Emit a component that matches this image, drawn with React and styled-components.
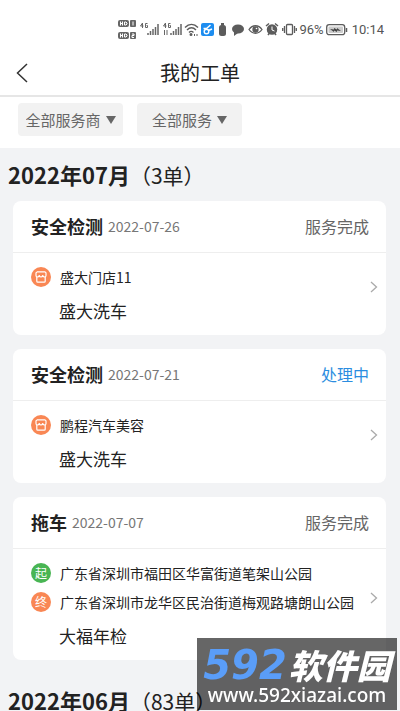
import React from 'react';
import styled, { createGlobalStyle } from 'styled-components';

const GlobalStyle = createGlobalStyle`
  * {
    box-sizing: border-box;
  }

  body {
    margin: 0;
    overflow-x: hidden;
    background-color: #f2f3f5;
    font-family: 'Noto Sans CJK SC', sans-serif;
    color: #222222;
  }
`;

const Page = styled.div`
  display: flex;
  flex-direction: column;
  height: 100vh;
  overflow: hidden;
`;

const StatusBar = styled.div`
  display: flex;
  align-items: center;
  justify-content: flex-end;
  gap: 2px;
  flex-shrink: 0;
  padding: 20px 16px 10px;
  background-color: #ffffff;
  font-family: Roboto, sans-serif;
  font-size: 13px;
  line-height: 20px;
  color: #555555;
`;

const Time = styled.time`
  margin-left: 2px;
`;

const NavBar = styled.header`
  display: grid;
  grid-template-columns: 44px 1fr 44px;
  align-items: center;
  flex-shrink: 0;
  height: 47px;
  border-bottom: 2px solid #e6e6e6;
  background-color: #ffffff;
`;

const Back = styled.button`
  display: flex;
  align-items: center;
  justify-content: center;
  height: 44px;
  padding: 0;
  border: 0;
  background: none;
  color: #333333;
`;

const Title = styled.h1`
  margin: 0;
  text-align: center;
  font-size: 20px;
  font-weight: 400;
  line-height: 30px;
`;

const Filters = styled.div`
  display: flex;
  gap: 14px;
  flex-shrink: 0;
  padding: 6px 18px 12px;
  background-color: #ffffff;
`;

const Filter = styled.label`
  display: flex;
  align-items: center;
  justify-content: center;
  gap: 4px;
  width: 105px;
  height: 33px;
  border-radius: 4px;
  background-color: #f2f2f2;
  color: #666666;
`;

const Select = styled.select`
  appearance: none;
  padding: 0;
  border: 0;
  background: none;
  font-family: inherit;
  font-size: 15px;
  line-height: 24px;
  color: inherit;
`;

const Month = styled.h2`
  margin: 0;
  padding: 10px 8px 11px;
  font-size: 22px;
  font-weight: 700;
  line-height: 32px;
`;

const Count = styled.span`
  font-size: 21px;
  font-weight: 400;
  line-height: 20px;
`;

const Card = styled.article`
  margin: 0 14px 14px 13px;
  padding-bottom: 14px;
  border-radius: 8px;
  background-color: #ffffff;
`;

const CardHead = styled.div`
  display: flex;
  align-items: center;
  height: 52px;
  padding: 0 17px 2px 18px;
  border-bottom: 1px solid #eeeeee;
`;

const Kind = styled.h3`
  margin: 0;
  font-size: 18px;
  font-weight: 700;
`;

const OrderDate = styled.time`
  margin-left: 5px;
  font-size: 14px;
  color: #777777;
`;

const Status = styled.span`
  margin-left: auto;
  font-size: 16px;
  color: ${props => (props.$active ? '#2b8de0' : '#666666')};
`;

const CardBody = styled.a`
  display: flex;
  align-items: center;
  justify-content: space-between;
  padding-right: 7px;
  text-decoration: none;
  color: inherit;
`;

const Details = styled.div`
  display: flex;
  flex-direction: column;
  gap: 9px;
  padding: 14px 0 0 18px;
`;

const Place = styled.div`
  display: flex;
  align-items: center;
  gap: 9px;
  font-size: 14px;
  line-height: 20px;
  white-space: nowrap;
`;

const Dot = styled.span`
  display: flex;
  align-items: center;
  justify-content: center;
  width: 20px;
  height: 20px;
  border-radius: 50%;
  background-color: ${props => (props.$start ? '#48b553' : '#f98754')};
  font-size: 12px;
  color: #ffffff;
`;

const Service = styled.div`
  margin: 5px 0 0 28px;
  font-size: 17px;
  line-height: 20px;
`;

const Watermark = styled.div`
  position: fixed;
  right: 3px;
  bottom: 1px;
  display: flex;
  flex-direction: column;
  align-items: center;
  width: 200px;
  height: 72px;
  padding-top: 7px;
  background-color: rgba(0, 0, 0, 0.6);
  color: #ffffff;
`;

const Brand = styled.div`
  display: flex;
  align-items: center;
  gap: 2px;
  font-size: 34px;
  font-weight: 900;
  font-style: italic;
  line-height: 40px;
  white-space: nowrap;
`;

const BrandNumber = styled.span`
  font-family: 'DejaVu Sans', sans-serif;
  font-size: 40px;
  font-weight: 700;
  color: #5a9df8;
`;

const Site = styled.div`
  font-family: 'Noto Sans', sans-serif;
  font-size: 19px;
  font-weight: 500;
  line-height: 20px;
`;

const HdIcon = () => (
  <svg width="20" height="20" viewBox="0 0 20 20" fill="#666666">
    <rect x="0" y="0" width="11" height="7" rx="2" />
    <rect x="12" y="0" width="6" height="7" rx="1" />
    <rect x="0" y="12" width="11" height="7" rx="2" />
    <rect x="12" y="12" width="6" height="7" rx="1" />
    <g stroke="#ffffff" fill="none">
      <path d="M2.500 1.500v4M4.500 1.500v4M2.500 3.500h2M6.500 2v3h1.500l1-1v-1l-1-1zM15 1.500v4" />
      <path d="M2.500 13.500v4M4.500 13.500v4M2.500 15.500h2M6.500 14v3h1.500l1-1v-1l-1-1zM14 14h2v1.500h-2v2h2" />
    </g>
  </svg>
);

const SignalIcon = ({ width, arrows }) => (
  <svg width={width} height="20" viewBox={`0 0 ${width} 20`} fill="none" stroke="#666666">
    <path d="M2.500 3l-2 3h3M2.500 3v5M7.500 3.500h-2v4h2v-2h-1" />
    <path d="M9 15v-2M11.500 15v-4M14 15V9M16.500 15V7M19 15V4" transform="translate(-1 0)" strokeWidth="1.500" />
    {arrows && <path d="M1.500 10v5M4 10v5" />}
  </svg>
);

const WifiIcon = () => (
  <svg width="15" height="20" viewBox="0 0 15 20" fill="none" stroke="#5c5c5c" strokeWidth="1.400">
    <path d="M1 7.500c4-4 9-4 13 0M3 10c3-3 6-3 9 0M5 12.500c1.500-1.500 3-1.500 4.500 0" />
    <circle cx="7" cy="14.500" r=".8" fill="#5c5c5c" />
    <path d="M10.500 14v2M13 14v2" strokeWidth="1" />
  </svg>
);

const AppIcon = () => (
  <svg width="14" height="20" viewBox="0 0 14 20" fill="none" stroke="#ffffff" strokeWidth="1.400">
    <rect x="0" y="3" width="13" height="13" rx="2" fill="#1d8df0" stroke="none" />
    <circle cx="5.500" cy="11.500" r="2.300" />
    <path d="M2.500 8.500h3l4-3.500M7.500 10.500l3.500-1.500" />
  </svg>
);

const PowerIcon = () => (
  <svg width="12" height="20" viewBox="0 0 12 20" fill="#5c5c5c">
    <rect x="4" y="3" width="3" height="2" />
    <rect x="2" y="5" width="7" height="11" rx="2.500" />
  </svg>
);

const BubbleIcon = () => (
  <svg width="15" height="20" viewBox="0 0 15 20" fill="#5c5c5c">
    <ellipse cx="7" cy="9" rx="6" ry="4.500" />
    <path d="M3 11v5l4-3z" />
  </svg>
);

const EyeIcon = () => (
  <svg width="15" height="20" viewBox="0 0 15 20" fill="none" stroke="#5c5c5c" strokeWidth="1.300">
    <path d="M1 9.500c3.500-5 9.500-5 13 0-3.500 5-9.500 5-13 0z" />
    <circle cx="7.500" cy="9.500" r="2.500" fill="#5c5c5c" />
    <circle cx="8.500" cy="8.500" r=".8" fill="#ffffff" stroke="none" />
  </svg>
);

const AlarmIcon = () => (
  <svg width="15" height="20" viewBox="0 0 15 20" fill="none" stroke="#5c5c5c" strokeWidth="1.500">
    <circle cx="7" cy="9.500" r="4.500" fill="#5c5c5c" />
    <path d="M1 6l3-2.500M13 6l-3-2.500M3 15l1.500-2M11 15l-1.500-2" />
    <path d="M7 6.500V10l2.500 1" stroke="#ffffff" strokeWidth="1" />
  </svg>
);

const VibrateIcon = () => (
  <svg width="15" height="20" viewBox="0 0 15 20" fill="none" stroke="#5c5c5c" strokeWidth="1.300">
    <rect x="4.500" y="4.500" width="6" height="10" rx="1" />
    <path d="M2.500 6v7M.7 8v3M12.500 6v7M14.300 8v3" />
  </svg>
);

const BatteryIcon = () => (
  <svg width="22" height="20" viewBox="0 0 22 20" fill="none" stroke="#5c5c5c">
    <rect x=".7" y="4.700" width="18" height="10" rx="2.500" strokeWidth="1.300" />
    <rect x="2.500" y="6.500" width="14.500" height="6.500" rx="1" fill="#cccccc" stroke="none" />
    <path d="M4 9l4 .5V8l3 1.500V8l4 3-4-.5v1.500L8 10.500V12z" fill="#444444" stroke="none" />
    <path d="M20.500 8v4" strokeWidth="1.500" />
  </svg>
);

const BackIcon = () => (
  <svg width="12" height="20" viewBox="0 0 12 20" fill="none" stroke="currentColor" strokeWidth="1.500">
    <path d="M11 1L1.500 10l9.500 9" />
  </svg>
);

const Caret = () => (
  <svg width="10" height="8" viewBox="0 0 10 8" fill="#666666">
    <path d="M0 0h10L5 8z" />
  </svg>
);

const Chevron = () => (
  <svg width="10" height="12" viewBox="0 0 10 12" fill="none" stroke="#aaaaaa" strokeWidth="1.300">
    <path d="M2 1l5.500 5L2 11" />
  </svg>
);

const ShopIcon = () => (
  <svg width="12" height="12" viewBox="0 0 12 12" fill="none" stroke="#ffffff" strokeWidth="1.200">
    <path d="M2 .8h8l1 1v2.700M2 .8l-1 1v2.700M1 4.500c0 2 2.500 2 3.300 0 .5 2 2.900 2 3.400 0 .8 2 3.300 2 3.300 0" strokeLinejoin="round" />
    <path d="M1.800 6v4.200c0 .6.400 1 1 1h6.400c.6 0 1-.4 1-1V6" />
  </svg>
);

const orders = [
  {
    kind: '安全检测',
    date: '2022-07-26',
    status: '服务完成',
    places: [{ name: '盛大门店11' }],
    service: '盛大洗车',
  },
  {
    kind: '安全检测',
    date: '2022-07-21',
    status: '处理中',
    active: true,
    places: [{ name: '鹏程汽车美容' }],
    service: '盛大洗车',
  },
  {
    kind: '拖车',
    date: '2022-07-07',
    status: '服务完成',
    places: [
      { mark: '起', name: '广东省深圳市福田区华富街道笔架山公园' },
      { mark: '终', name: '广东省深圳市龙华区民治街道梅观路塘朗山公园' },
    ],
    service: '大福年检',
  },
];

const Order = ({ order }) => (
  <Card>
    <CardHead>
      <Kind>{order.kind}</Kind>
      <OrderDate>{order.date}</OrderDate>
      <Status $active={order.active}>{order.status}</Status>
    </CardHead>
    <CardBody href="#order">
      <Details>
        {order.places.map(place => (
          <Place key={place.name}>
            <Dot $start={place.mark === '起'}>{place.mark || <ShopIcon />}</Dot>
            {place.name}
          </Place>
        ))}
        <Service>{order.service}</Service>
      </Details>
      <Chevron />
    </CardBody>
  </Card>
);

const App = () => (
  <Page>
    <GlobalStyle />
    <StatusBar>
      <HdIcon />
      <SignalIcon width={21} />
      <SignalIcon width={19} arrows />
      <WifiIcon />
      <AppIcon />
      <PowerIcon />
      <BubbleIcon />
      <EyeIcon />
      <AlarmIcon />
      <VibrateIcon />
      <span>96%</span>
      <BatteryIcon />
      <Time>10:14</Time>
    </StatusBar>
    <NavBar>
      <Back aria-label="返回">
        <BackIcon />
      </Back>
      <Title>我的工单</Title>
    </NavBar>
    <Filters>
      <Filter>
        <Select aria-label="服务商">
          <option>全部服务商</option>
        </Select>
        <Caret />
      </Filter>
      <Filter>
        <Select aria-label="服务">
          <option>全部服务</option>
        </Select>
        <Caret />
      </Filter>
    </Filters>
    <main>
      <Month>
        2022年07月<Count>（3单）</Count>
      </Month>
      {orders.map(order => <Order key={order.date} order={order} />)}
      <Month>
        2022年06月<Count>（83单）</Count>
      </Month>
    </main>
    <Watermark>
      <Brand>
        <BrandNumber>592</BrandNumber>
        软件园
      </Brand>
      <Site>www.592xiazai.com</Site>
    </Watermark>
  </Page>
);

export default App;
